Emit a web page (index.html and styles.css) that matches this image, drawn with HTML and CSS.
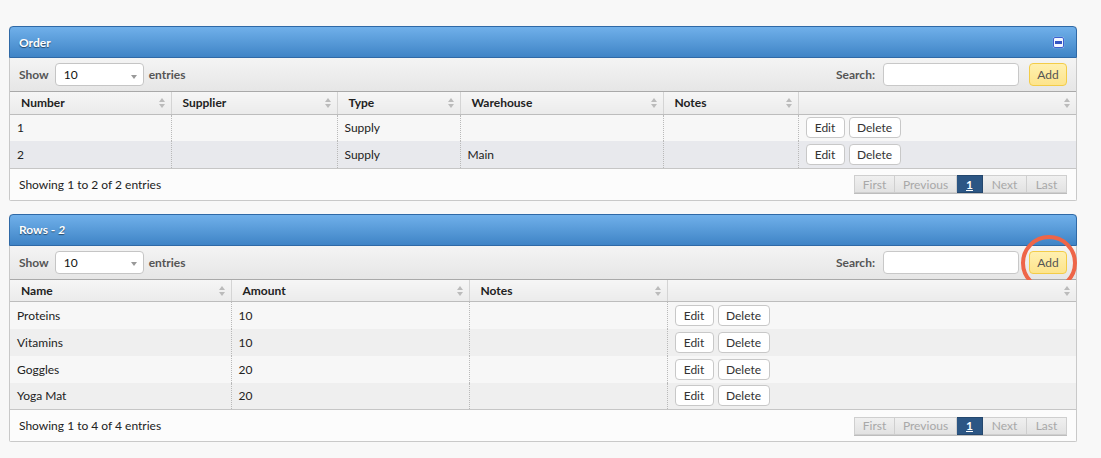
FILE: index.html
```html
<!DOCTYPE html>
<html>
<head>
<meta charset="utf-8">
<link rel="stylesheet" href="styles.css">
</head>
<body>
<div class="page">
  <section class="panel">
    <div class="panel-head">
      <span class="title">Order</span>
      <span class="minus"></span>
    </div>
    <div class="toolbar">
      <div class="length">
        <label>Show</label>
        <div class="select"><span>10</span><i class="caret"></i></div>
        <label>entries</label>
      </div>
      <div class="filter">
        <label>Search:</label>
        <input type="text" class="search">
        <button class="add">Add</button>
      </div>
    </div>
    <table class="grid">
      <colgroup><col style="width:161px"><col style="width:166px"><col style="width:123px"><col style="width:203px"><col style="width:135px"><col></colgroup>
      <thead>
        <tr>
          <th>Number<i class="sort"></i></th>
          <th>Supplier<i class="sort"></i></th>
          <th>Type<i class="sort"></i></th>
          <th>Warehouse<i class="sort"></i></th>
          <th>Notes<i class="sort"></i></th>
          <th><i class="sort"></i></th>
        </tr>
      </thead>
      <tbody class="blue">
        <tr><td>1</td><td></td><td>Supply</td><td></td><td></td><td><button class="btn">Edit</button><button class="btn del">Delete</button></td></tr>
        <tr><td>2</td><td></td><td>Supply</td><td>Main</td><td></td><td><button class="btn">Edit</button><button class="btn del">Delete</button></td></tr>
      </tbody>
    </table>
    <div class="footer">
      <span class="info">Showing 1 to 2 of 2 entries</span>
      <div class="pager">
        <span class="pg w-first">First</span><span class="pg w-prev">Previous</span><span class="pg cur">1</span><span class="pg w-next">Next</span><span class="pg w-last">Last</span>
      </div>
    </div>
  </section>

  <section class="panel">
    <div class="panel-head">
      <span class="title">Rows - <em>2</em></span>
    </div>
    <div class="toolbar">
      <div class="length">
        <label>Show</label>
        <div class="select"><span>10</span><i class="caret"></i></div>
        <label>entries</label>
      </div>
      <div class="filter">
        <label>Search:</label>
        <input type="text" class="search">
        <span class="add-wrap"><button class="add">Add</button><span class="ring"></span></span>
      </div>
    </div>
    <table class="grid">
      <colgroup><col style="width:221px"><col style="width:238px"><col style="width:198px"><col></colgroup>
      <thead>
        <tr>
          <th>Name<i class="sort"></i></th>
          <th>Amount<i class="sort"></i></th>
          <th>Notes<i class="sort"></i></th>
          <th><i class="sort"></i></th>
        </tr>
      </thead>
      <tbody>
        <tr><td>Proteins</td><td>10</td><td></td><td><button class="btn">Edit</button><button class="btn del">Delete</button></td></tr>
        <tr><td>Vitamins</td><td>10</td><td></td><td><button class="btn">Edit</button><button class="btn del">Delete</button></td></tr>
        <tr><td>Goggles</td><td>20</td><td></td><td><button class="btn">Edit</button><button class="btn del">Delete</button></td></tr>
        <tr><td>Yoga Mat</td><td>20</td><td></td><td><button class="btn">Edit</button><button class="btn del">Delete</button></td></tr>
      </tbody>
    </table>
    <div class="footer">
      <span class="info">Showing 1 to 4 of 4 entries</span>
      <div class="pager">
        <span class="pg w-first">First</span><span class="pg w-prev">Previous</span><span class="pg cur">1</span><span class="pg w-next">Next</span><span class="pg w-last">Last</span>
      </div>
    </div>
  </section>
</div>
</body>
</html>
```

FILE: styles.css
```css
* { box-sizing: border-box; }
html, body { margin: 0; padding: 0; background: #f8f8f8; }
body { font-family: "Lato", "Liberation Sans", sans-serif; font-size: 12px; color: #222; }

.page { padding: 26px 24px 0 9px; display: flex; flex-direction: column; gap: 13px; }

.panel { width: 1068px; border: 1px solid #c9c9c9; border-top: 0; border-radius: 4px 4px 2px 2px; background: #fcfcfc; }

.panel-head {
  height: 32px; display: flex; align-items: center; justify-content: space-between;
  padding: 0 12px 0 9px;
  background: linear-gradient(#70b0ea, #3f84c6);
  border: 1px solid #2f69a6; margin: 0 -1px; border-radius: 4px 4px 0 0;
}
.title { color: #fff; font-weight: 700; font-size: 12px; text-shadow: 0 1px 1px rgba(0,0,0,0.5); }
.title em { font-style: italic; }
.minus { width: 11px; height: 11px; background: #f4f7ff; border: 1px solid #3d5fd0; border-radius: 2px; position: relative; box-shadow: 0 0 1px rgba(255,255,255,0.8); }
.minus::after { content: ""; position: absolute; left: 1px; right: 1px; top: 3px; height: 3px; background: #3554c2; }

.toolbar {
  height: 34px; display: flex; align-items: center; justify-content: space-between;
  padding: 0 9px 0 9px;
  background: linear-gradient(#f4f4f4, #e6e6e6);
  border-bottom: 1px solid #a9a9a9;
}
.toolbar label { font-weight: 700; color: #555; font-size: 12px; }
.length, .filter { display: flex; align-items: center; }
.select {
  width: 89px; height: 23px; margin: 0 5px 0 6px; background: #fff; border: 1px solid #c5c5c5; border-radius: 4px;
  display: flex; align-items: center; justify-content: space-between; padding: 0 6px 0 8px; color: #111; font-size: 12px;
}
.caret { width: 0; height: 0; border-left: 3px solid transparent; border-right: 3px solid transparent; border-top: 4px solid #999; margin-top: 4px; }
.search { width: 136px; height: 23px; margin: 0 10px 0 8px; background: #fff; border: 1px solid #c8c8c8; border-radius: 4px; outline: none; }
.add-wrap { position: relative; display: flex; }
.add {
  width: 38px; height: 23px; padding: 0; font-family: inherit; font-size: 12px; color: #555;
  background: linear-gradient(#fff0b0, #fde48c); border: 1px solid #f3cc48; border-radius: 4px;
}
.ring { position: absolute; left: -8px; top: -16px; width: 56px; height: 56px; border: 4px solid #ee6548; border-radius: 50%; pointer-events: none; }

.grid { width: 100%; border-collapse: collapse; table-layout: fixed; }
.grid th {
  height: 22px; text-align: left; padding: 0 10px 0 11px; font-weight: 700; color: #222; font-size: 12px;
  background: linear-gradient(#f6f6f6, #ebebeb); border-right: 1px solid #d4d4d4; border-bottom: 1px solid #bdbdbd; position: relative;
}
.grid th:last-child { border-right: 0; }
.sort { position: absolute; right: 6px; top: 6px; width: 6px; height: 10px; }
.sort::before, .sort::after { content: ""; position: absolute; left: 0; width: 0; height: 0; border-left: 3px solid transparent; border-right: 3px solid transparent; }
.sort::before { top: 0; border-bottom: 4px solid #bbb; }
.sort::after { bottom: 0; border-top: 4px solid #bbb; }
.grid td { height: 27px; padding: 0 7px; color: #222; border-right: 1px dotted #b9b9b9; white-space: nowrap; }
.grid td:last-child { border-right: 0; }
.grid tbody tr:nth-child(odd) td { background: #f7f7f7; }
.grid tbody tr:nth-child(even) td { background: #efefef; }
.grid tbody.blue tr:nth-child(even) td { background: #e8e9ed; }
.grid tbody tr:last-child td { border-bottom: 1px solid #c6c6c6; }

.btn {
  height: 21px; padding: 0; margin-right: 4px; font-family: inherit; font-size: 12px; color: #333;
  background: #fff; border: 1px solid #c8c8c8; border-radius: 4px; width: 39px; vertical-align: middle;
}
.btn.del { width: 52px; }

.footer { height: 31px; display: flex; align-items: center; justify-content: space-between; padding: 0 9px 0 9px; background: #fcfcfc; }
.info { color: #222; }
.pager { display: flex; height: 18px; }
.pg { display: flex; align-items: center; justify-content: center; height: 18px; color: #a8a8a8; font-size: 12px;
  background: linear-gradient(#f0f0f0, #e2e2e2); border: 1px solid #cfcfcf; border-left: 0; box-shadow: 0 1px 0 #bdbdbd; }
.pg.w-first { width: 41px; border-left: 1px solid #cfcfcf; }
.pg.w-prev { width: 62px; }
.pg.cur { width: 26px; background: #2c5684; color: #fff; font-weight: 700; border-color: #24476d; text-decoration: underline; text-underline-offset: 1px; }
.pg.w-next { width: 44px; }
.pg.w-last { width: 40px; }
```
